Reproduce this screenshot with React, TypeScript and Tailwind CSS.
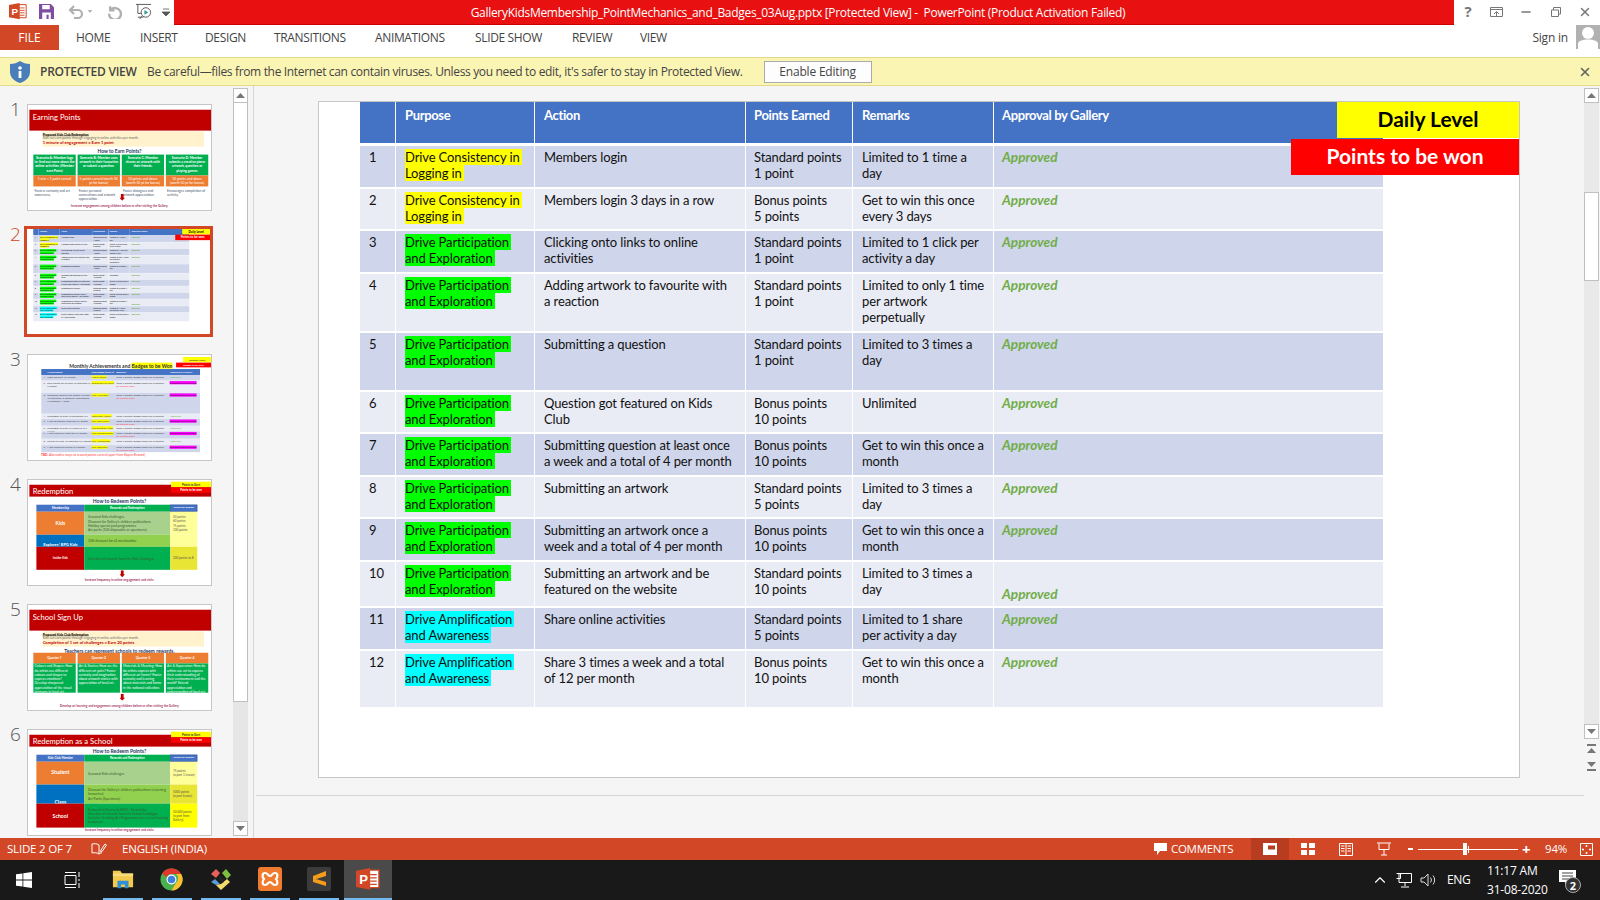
import React from 'react';
import { Minus, X, ChevronUp } from 'lucide-react';

const ui = "font-['Open_Sans',sans-serif]";
const calibri = "font-['Lato',sans-serif]";

type Row = { n: number; purpose: string[]; tone: string; action: string[]; points: string[]; remarks: string[]; h: string; low?: boolean };

const YELLOW = 'bg-[#ffff00]';
const GREEN = 'bg-[#00ff00]';
const CYAN = 'bg-[#00ffff]';
const consistency = ['Drive Consistency in', 'Logging in'];
const participation = ['Drive Participation', 'and Exploration'];
const amplification = ['Drive Amplification', 'and Awareness'];

const rows: Row[] = [
  { n: 1, purpose: consistency, tone: YELLOW, action: ['Members login'], points: ['Standard points', '1 point'], remarks: ['Limited to 1 time a', 'day'], h: 'h-[41px]' },
  { n: 2, purpose: consistency, tone: YELLOW, action: ['Members login 3 days in a row'], points: ['Bonus points', '5 points'], remarks: ['Get to win this once', 'every 3 days'], h: 'h-[40px]' },
  { n: 3, purpose: participation, tone: GREEN, action: ['Clicking onto links to online', 'activities'], points: ['Standard points', '1 point'], remarks: ['Limited to 1 click per', 'activity a day'], h: 'h-[41px]' },
  { n: 4, purpose: participation, tone: GREEN, action: ['Adding artwork to favourite with', 'a reaction'], points: ['Standard points', '1 point'], remarks: ['Limited to only 1 time', 'per artwork', 'perpetually'], h: 'h-[57px]' },
  { n: 5, purpose: participation, tone: GREEN, action: ['Submitting a question'], points: ['Standard points', '1 point'], remarks: ['Limited to 3 times a', 'day'], h: 'h-[57px]' },
  { n: 6, purpose: participation, tone: GREEN, action: ['Question got featured on Kids', 'Club'], points: ['Bonus points', '10 points'], remarks: ['Unlimited'], h: 'h-[40px]' },
  { n: 7, purpose: participation, tone: GREEN, action: ['Submitting question at least once', 'a week and a total of 4 per month'], points: ['Bonus points', '10 points'], remarks: ['Get to win this once a', 'month'], h: 'h-[41px]' },
  { n: 8, purpose: participation, tone: GREEN, action: ['Submitting an artwork'], points: ['Standard points', '5 points'], remarks: ['Limited to 3 times a', 'day'], h: 'h-[40px]' },
  { n: 9, purpose: participation, tone: GREEN, action: ['Submitting an artwork once a', 'week and a total of 4 per month'], points: ['Bonus points', '10 points'], remarks: ['Get to win this once a', 'month'], h: 'h-[41px]' },
  { n: 10, purpose: participation, tone: GREEN, action: ['Submitting an artwork and be', 'featured on the website'], points: ['Standard points', '10 points'], remarks: ['Limited to 3 times a', 'day'], h: 'h-[44px]', low: true },
  { n: 11, purpose: amplification, tone: CYAN, action: ['Share online activities'], points: ['Standard points', '5 points'], remarks: ['Limited to 1 share', 'per activity a day'], h: 'h-[41px]' },
  { n: 12, purpose: amplification, tone: CYAN, action: ['Share 3 times a week and a total', 'of 12 per month'], points: ['Bonus points', '10 points'], remarks: ['Get to win this once a', 'month'], h: 'h-[56px]' },
];

const Lines = ({ lines }: { lines: string[] }) => (
  <>
    {lines.map((l) => (
      <div key={l} className="whitespace-nowrap">{l}</div>
    ))}
  </>
);

const colClass = 'grid grid-cols-[35px_138px_210px_106px_140px_389px] gap-x-[1px]';

function PointsSlide() {
  const heads = [
    ['', 'pl-[9px]'],
    ['Purpose', 'pl-[9px]'],
    ['Action', 'pl-[9px]'],
    ['Points Earned', 'pl-[8px]'],
    ['Remarks', 'pl-[9px]'],
    ['Approval by Gallery', 'pl-[8px]'],
  ];
  return (
    <div className={`relative h-[675px] w-[1200px] bg-white pl-[41px] text-[13px] leading-[16px] tracking-[-0.12px] text-[#111] ${calibri}`}>
      <div className={`${colClass} mb-[3px] h-[41px] font-bold tracking-[-0.35px] text-white`}>
        {heads.map(([h, pad], i) => (
          <div key={i} className={`bg-[#4472c4] pt-[5px] ${pad}`}>{h}</div>
        ))}
      </div>
      <div className="flex flex-col gap-y-[2px]">
        {rows.map((r) => {
          const bg = r.n % 2 ? 'bg-[#cfd5ea]' : 'bg-[#e9ebf5]';
          return (
            <div key={r.n} className={`${colClass} ${r.h}`}>
              <div className={`${bg} pl-[9px] pt-[3px]`}>{r.n}</div>
              <div className={`${bg} pl-[9px] pt-[3px]`}>
                {r.purpose.map((l) => (
                  <div key={l}>
                    <span className={`${r.tone} whitespace-nowrap pr-[2px]`}>{l}</span>
                  </div>
                ))}
              </div>
              <div className={`${bg} pl-[9px] pt-[3px]`}><Lines lines={r.action} /></div>
              <div className={`${bg} pl-[8px] pt-[3px]`}><Lines lines={r.points} /></div>
              <div className={`${bg} pl-[9px] pt-[3px]`}><Lines lines={r.remarks} /></div>
              <div className={`${bg} flex pl-[8px] pt-[3px] pb-[4px] ${r.low ? 'items-end' : 'items-start'}`}>
                <span className="text-[13.6px] font-bold italic tracking-normal text-[#70ad47]">Approved</span>
              </div>
            </div>
          );
        })}
      </div>
      <div className="absolute right-0 top-0 flex h-[36px] w-[182px] items-center justify-center bg-[#ffff00] pb-[2px] text-[21px] font-bold tracking-normal text-black">Daily Level</div>
      <div className="absolute right-0 top-[37px] flex h-[36px] w-[228px] items-center justify-center bg-[#ff0000] pb-[2px] text-[21px] font-bold tracking-normal text-white">Points to be won</div>
    </div>
  );
}

const SlideTitle = ({ text, tall }: { text: string; tall?: boolean }) => (
  <div className={`ml-[9px] flex bg-[#c00000] pl-[22px] text-[50px] text-white ${tall ? 'h-[137px] items-start pt-[14px]' : 'h-[78px] items-center'}`}>{text}</div>
);

const Badges = () => (
  <div className="absolute right-0 top-[11px] w-[262px] text-center text-[19px] font-bold">
    <div className="h-[37px] bg-[#ffff00] leading-[37px] text-[#333]">Points to Earn</div>
    <div className="h-[35px] bg-[#ff0000] leading-[35px] text-white">Points to be won</div>
  </div>
);

const DownArrow = () => (
  <svg viewBox="0 0 36 46" className="h-[46px] w-[36px]"><path d="M9 0h18v26h9L18 46 0 26h9z" fill="#c00000" /></svg>
);

function CardsSlide({ title, line, heading, cards, footer, swap }: { title: string; line: string; heading: string; cards: { top: string; bottom: string; below?: string }[]; footer: string; swap?: boolean }) {
  return (
    <div className={`relative h-[675px] w-[1200px] bg-white pt-[31px] ${calibri}`}>
      <SlideTitle text={title} tall />
      <div className="ml-[96px] mt-[5px] h-[100px] w-[1058px] bg-[#fff2cc] pt-[6px] text-[21px] leading-[26px]">
        <div className="font-bold text-black underline">Proposed Kids Club Redemption</div>
        <div className="text-[#666]">Kids can earn points through engaging in online activities per month.</div>
        <div className="text-[27px] font-bold text-[#c00000]">{line}</div>
      </div>
      <div className="mt-[12px] text-center text-[32px] font-bold leading-[36px] text-[#1f3864]">{heading}</div>
      <div className={`${swap ? 'mt-[-8px] h-[330px]' : 'mt-[4px] h-[318px]'} ml-[35px] flex w-[1147px] gap-x-[12px] text-center text-[22px] leading-[28px] text-white`}>
        {cards.map((c, i) => (
          <div key={i} className="flex-1">
            {swap ? (
              <>
                <div className="h-[70px] bg-[#ed7d31] pt-[18px] font-bold">{c.top}</div>
                <div className="h-[192px] overflow-hidden bg-[#00b050] px-[8px] pt-[4px] text-left">{c.bottom}</div>
              </>
            ) : (
              <>
                <div className="h-[137px] overflow-hidden bg-[#00b050] px-[8px] pt-[6px] font-bold">{c.top}</div>
                <div className="h-[72px] overflow-hidden bg-[#ed7d31] px-[8px] pt-[8px]">{c.bottom}</div>
                <div className="px-[8px] pt-[14px] text-left text-[#44546a]">{c.below}</div>
              </>
            )}
          </div>
        ))}
      </div>
      <div className="text-center text-[20px] font-bold text-[#a5305e]">{footer}</div>
      <div className="absolute left-[600px] top-[582px]"><DownArrow /></div>
    </div>
  );
}

const AchievementRows = [
  { a: 'Login 30 days in a month', b: 'Active Streak', c: 'Once a month; Badge shows for 3 months', d: 'Approved', h: 'h-[37px]', bg: 'bg-[#cfd5ea]' },
  { a: 'Earn points on at least 10 activities in a month', b: 'Exploring Kid Scout', c: 'Once a month; Badge shows for 3 months', d: 'pending', h: 'h-[81px]', bg: 'bg-[#e9ebf5]' },
  { a: 'Complete most of the month: at least 10 activities, 5 artworks, 3 questions, 2 reactions, 1 share', b: 'The Allrounder', c: 'Once a month; Badge shows for 3 months', d: 'pending', h: 'h-[136px]', bg: 'bg-[#cfd5ea]' },
  { a: 'Submitted at least 10 questions in a month', b: 'Inquiring Monkey', c: 'Once a month; Badge shows for 3 months', d: 'Approved', h: 'h-[35px]', bg: 'bg-[#e9ebf5]' },
  { a: 'Most questions featured in a month', b: 'The Interviewer', c: 'Once a month; Badge shows for 3 months', d: 'pending', h: 'h-[44px]', bg: 'bg-[#cfd5ea]' },
  { a: 'Submitted at least 10 artworks in a month', b: 'The Budding Artist', c: 'Once a month; Badge shows for 3 months', d: 'Approved', h: 'h-[37px]', bg: 'bg-[#e9ebf5]' },
  { a: 'Most artworks featured in a month', b: 'The Communicator', c: 'Once a month; Badge shows for 3 months', d: 'pending', h: 'h-[48px]', bg: 'bg-[#cfd5ea]' },
  { a: 'Shared at least 10 activities in a month', b: 'The Ambassador', c: 'Once a month; Badge shows for 3 months', d: 'Approved', h: 'h-[42px]', bg: 'bg-[#e9ebf5]' },
  { a: 'Most artworks shared in a month', b: 'The Inspirator', c: 'Once a month; Badge shows for 3 months', d: 'pending', h: 'h-[46px]', bg: 'bg-[#cfd5ea]' },
];

function AchievementsSlide() {
  const grid = 'grid grid-cols-[39px_289px_160px_350px_199px] gap-x-[1px]';
  return (
    <div className={`relative h-[675px] w-[1200px] bg-white pt-[52px] text-[17px] leading-[19px] text-[#444] ${calibri}`}>
      <div className="pl-[271px] text-[33px] font-bold leading-[36px] text-[#333]">
        Monthly Achievements and <span className="bg-[#ffff00]">Badges to be Won</span>
      </div>
      <div className={`${grid} ml-[87px] mt-[4px] h-[39px] w-[1041px] bg-[#4472c4] pt-[8px] font-bold text-white`}>
        <div /><div>Achievement</div><div>Kids Badge (level 1)</div><div>Remarks</div><div>Approval by Gallery</div>
      </div>
      <div className="ml-[87px] w-[1041px]">
        {AchievementRows.map((r, i) => (
          <div key={i} className={`${grid} ${r.h} ${r.bg} overflow-hidden pt-[4px]`}>
            <div className="pl-[14px]">{i + 1}</div>
            <div>{r.a}</div>
            <div><span className="bg-[#ffff00]">{r.b}</span></div>
            <div>
              {r.c}
              {r.d !== 'Approved' && <div className="text-[#ff4040]">no renewal copy</div>}
            </div>
            <div>{r.d === 'Approved' ? <span className="text-[#70ad47]">Approved</span> : <span className="bg-[#ff00ff] text-[#222]">Pending to be reviewed</span>}</div>
          </div>
        ))}
      </div>
      <div className="ml-[85px] mt-[8px] text-[21px] text-[#ff4040]"><b>TBD:</b> Alternative ways to reward points earned (apart from Kopen Reward)</div>
      <div className="absolute right-0 top-[13px] flex flex-col items-end text-center font-bold">
        <div className="h-[35px] w-[183px] bg-[#ffff00] leading-[35px] text-[#333]">Monthly Level</div>
        <div className="mt-[2px] h-[31px] w-[229px] bg-[#ff0000] leading-[31px] text-white">Badges to be won</div>
      </div>
    </div>
  );
}

type RedeemRow = { label: string; cls: string; mid: string[]; midBg: string; end: string[]; endBg: string; h: string; labelCls: string };

function RedeemSlide({ title, first, rowsData, footer, arrow }: { title: string; first: string; rowsData: RedeemRow[]; footer: string; arrow?: boolean }) {
  return (
    <div className={`relative h-[675px] w-[1200px] bg-white pt-[31px] ${calibri}`}>
      <SlideTitle text={title} />
      <div className="mt-[12px] text-center text-[33px] font-bold leading-[36px] text-[#1f3864]">How to Redeem Points?</div>
      <div className="ml-[55px] mt-[5px] w-[1055px] text-[22px] leading-[27px]">
        <div className="grid h-[46px] grid-cols-[314px_564px_177px] text-center text-[20px] font-bold text-white">
          <div className="bg-[#4472c4] pt-[10px]">{first}</div>
          <div className="bg-[#00b050] pt-[10px]">Rewards and Redemption</div>
          <div className="border-[4px] border-[#2f5597] bg-[#4472c4] text-[17px] leading-[19px]">Points per quarter</div>
        </div>
        {rowsData.map((r) => (
          <div key={r.label} className={`grid grid-cols-[314px_564px_177px] ${r.h}`}>
            <div className={`flex justify-center font-bold text-white ${r.cls} ${r.labelCls}`}>{r.label}</div>
            <div className={`${r.midBg} flex flex-col justify-center pl-[24px] text-[#3b5a2a]`}>
              {r.mid.map((m) => <div key={m}>{m}</div>)}
            </div>
            <div className={`${r.endBg} flex flex-col justify-center pl-[18px] text-[20px] text-[#555]`}>
              {r.end.map((m) => <div key={m}>{m}</div>)}
            </div>
          </div>
        ))}
      </div>
      <div className={arrow ? 'ml-[600px] h-[52px] pt-[3px]' : 'h-[1px]'}>{arrow && <DownArrow />}</div>
      <div className="text-center text-[20px] font-bold text-[#a5305e]">{footer}</div>
      <Badges />
    </div>
  );
}

const slide1Cards = [
  { top: 'Scenario A: Member logs in: find out more about the online activities. (Member earn Point)', bottom: '1 min = 1 point earned', below: 'Fosters curiosity and art awareness.' },
  { top: 'Scenario B: Member uses artwork in their favourites or submit a question.', bottom: '5 points earned (worth 50 pt for bonus)', below: 'Foster personal connections and artwork appreciation.' },
  { top: 'Scenario C: Member shares an artwork with their friends.', bottom: '10 points and above (worth 50 pt for bonus)', below: 'Foster dialogues and artwork appreciation.' },
  { top: 'Scenario D: Member submits a creative piece: artwork, question or playing games.', bottom: '10 points and above (worth 50 pt for bonus)', below: 'Encourages completion of activity.' },
];
const slide5Cards = [
  { top: 'Quarter 1', bottom: 'Colours and Shapes: How do artists use different colours and shapes to express emotions? Develop sharpened appreciation of the visual language in local art.' },
  { top: 'Quarter 2', bottom: 'Art & Stories: How are the different art pairs? Foster curiosity and imagination about artwork stories with appreciation of local art.' },
  { top: 'Quarter 3', bottom: 'Materials & Meaning: How do artists express with different art forms? Foster curiosity and learning about materials and forms in the national collection.' },
  { top: 'Quarter 4', bottom: 'Art & Expression: How do artists use art to express their understanding of their environment and the world? Extend appreciation and understanding of local art.' },
];

const Slides: Record<number, React.ReactNode> = {
  1: <CardsSlide title="Earning Points" line="1 minute of engagement = Earn 1 point" heading="How to Earn Points?" cards={slide1Cards} footer="Increase engagement among children before or after visiting the Gallery." />,
  2: <PointsSlide />,
  3: <AchievementsSlide />,
  4: <RedeemSlide arrow title="Redemption" first="Membership" footer="Increase frequency in online engagement and visits." rowsData={[
    { label: 'Kids', cls: 'bg-[#ed7d31]', labelCls: 'items-center text-[32px]', mid: ['Seasonal Kids challenges', "Discount for Gallery's children publications", 'Holiday special paid programmes', 'Art packs (100 disposable or specimens)'], midBg: 'bg-[#a9d18e]', end: ['50 points', '60 points', '75 points', '100 points'], endBg: 'bg-[#ffff99]', h: 'h-[151px]' },
    { label: 'Explorer/ BPG Kids', cls: 'bg-[#0070c0]', labelCls: 'items-end text-[26px]', mid: ['10% discount for all merchandise'], midBg: 'bg-[#92d050]', end: [''], endBg: 'bg-[#ffff99]', h: 'h-[79px]' },
    { label: 'Insider Kids', cls: 'bg-[#c00000]', labelCls: 'items-center text-[19px]', mid: ['Selection of rewards from the Kids Catalogue'], midBg: 'bg-[#00b050]', end: ['100 points to 8'], endBg: 'bg-[#e9e535]', h: 'h-[151px]' },
  ]} />,
  5: <CardsSlide swap title="School Sign Up" line="Completion of 1 set of challenges = Earn 20 points" heading="Teachers can represent schools to redeem rewards." cards={slide5Cards} footer="Develop art learning and engagement among children before or after visiting the Gallery." />,
  6: <RedeemSlide title="Redemption as a School" first="Kids Club Member" footer="Increase frequency in online engagement and visits." rowsData={[
    { label: 'Student', cls: 'bg-[#ed7d31]', labelCls: 'items-center pb-[20px] text-[34px]', mid: ['Seasonal Kids challenges'], midBg: 'bg-[#a9d18e]', end: ['75 points', '(report 1 lesson)'], endBg: 'bg-[#ffff99]', h: 'h-[150px]' },
    { label: 'Class', cls: 'bg-[#0070c0]', labelCls: 'items-end text-[34px]', mid: ["Discount for Gallery's children publications (returning favourites)", 'Art Packs (Specimens)'], midBg: 'bg-[#92d050]', end: ['5000 points', '(report lesson)'], endBg: 'bg-[#e9e535]', h: 'h-[125px]' },
    { label: 'School', cls: 'bg-[#c00000]', labelCls: 'items-center text-[34px]', mid: ['Featured in Quarterly EDM / Newsletter', 'Selection of rewards from the School Catalogue', '(includes Teaching Art Programmes on a set of learning resources)'], midBg: 'bg-[#00b050]', end: ['50,000 points', '(report from Gallery)'], endBg: 'bg-[#ffff00]', h: 'h-[157px]' },
  ]} />,
};

function Thumb({ n, active }: { n: number; active?: boolean }) {
  return (
    <div className="flex h-[125px] items-start">
      <div className={`mt-[-7px] w-[24px] pl-[10px] text-[19px] font-light leading-[24px] ${active ? 'text-[#d24726]' : 'text-[#555]'} ${ui}`}>{n}</div>
      <div className={active ? 'mt-[-3px] border-[3px] border-[#d24726] bg-white' : 'ml-[3px] border border-[#c6c6c6] bg-white'}>
        <div className="h-[105px] w-[183px] overflow-hidden">
          <div className="origin-top-left scale-[0.1525]">{Slides[n]}</div>
        </div>
      </div>
    </div>
  );
}

const Arrow = ({ down }: { down?: boolean }) => (
  <div className="flex h-[15px] w-[15px] items-center justify-center border border-[#c0c0c0] bg-white">
    <svg viewBox="0 0 9 5" className="h-[5px] w-[9px]"><path d={down ? 'M0 0h9L4.5 5z' : 'M0 5h9L4.5 0z'} fill="#777" /></svg>
  </div>
);

function PptIcon({ size }: { size: number }) {
  return (
    <svg viewBox="0 0 22 20" width={size} height={size * 20 / 22}>
      <path d="M12 2h9v16h-9z" fill="#fff" stroke="#d24726" strokeWidth="1.2" />
      <path d="M13 6h6M13 9h6M13 12h6M13 15h6" stroke="#d24726" strokeWidth="1.1" />
      <path d="M0 2.5 13 0v20L0 17.5z" fill="#d24726" />
      <text x="3" y="14.5" fontSize="12" fontWeight="700" fill="#fff" fontFamily="Liberation Sans, sans-serif">P</text>
    </svg>
  );
}

function TitleBar() {
  return (
    <div className={`flex h-[25px] items-start ${ui}`}>
      <div className="flex h-[25px] w-[174px] items-center pb-[2px]">
        <div className="ml-[9px]"><PptIcon size={18} /></div>
        <svg viewBox="0 0 14 14" className="ml-[12px] h-[15px] w-[15px]"><path d="M0 0h11l3 3v11H0z" fill="#7e4ea3" /><path d="M3 1h7v4H3zM3 8h8v6H3z" fill="#fff" /><path d="M7 10h2v4H7z" fill="#7e4ea3" /></svg>
        <svg viewBox="0 0 16 14" className="ml-[14px] h-[14px] w-[16px]" fill="none" stroke="#b0b0b0" strokeWidth="2.2"><path d="M2 5h8a4 4 0 0 1 0 8H6" /><path d="M6 1 2 5l4 4" /></svg>
        <svg viewBox="0 0 6 4" className="ml-[3px] h-[3px] w-[6px]"><path d="M0 0h6L3 4z" fill="#b0b0b0" /></svg>
        <svg viewBox="0 0 14 14" className="ml-[14px] h-[15px] w-[15px]" fill="none" stroke="#b0b0b0" strokeWidth="2.2"><path d="M3 2v4h4" /><path d="M3.5 5.5A5.5 5.5 0 1 1 2 9" /></svg>
        <svg viewBox="0 0 18 18" className="ml-[13px] h-[17px] w-[17px]" fill="none"><path d="M1 1.5h16M3 2v9h5M7 14l-2 3M3 15h6" stroke="#555" /><circle cx="11.5" cy="10" r="5" fill="#fff" stroke="#555" /><path d="M10 7.5v5l4-2.5z" fill="#2f9c8b" /></svg>
        <svg viewBox="0 0 8 8" className="ml-[10px] h-[8px] w-[8px]"><path d="M1 1h6M0 4h8L4 8z" fill="#555" stroke="#555" strokeWidth="0.8" /></svg>
      </div>
      <div className="flex h-[25px] w-[1280px] items-center justify-center border-b border-[#c00] bg-[#e81010] pr-[32px] pt-[1px] text-[12px] tracking-[-0.3px] text-white">
        GalleryKidsMembership_PointMechanics_and_Badges_03Aug.pptx [Protected View] -&nbsp; PowerPoint (Product Activation Failed)
      </div>
      <div className="flex h-[25px] flex-1 items-center pb-[2px] text-[#777]">
        <span className="ml-[8px] w-[12px] text-center text-[15px] font-bold leading-none">?</span>
        <svg viewBox="0 0 13 10" className="ml-[16px] h-[10px] w-[13px]" fill="none" stroke="#777"><path d="M.5.500h12v9H.5zM.5 2.500h12" /><path d="M4 7l2.500-2.500L9 7M6.500 5v4" /></svg>
        <Minus size={14} strokeWidth={2.5} className="ml-[16px]" />
        <svg viewBox="0 0 10 10" className="ml-[18px] h-[10px] w-[10px]" fill="none" stroke="#777"><path d="M.5 3h7v6.500h-7zM2.500 3V.5h7v6.500H8" /></svg>
        <X size={14} strokeWidth={2.5} className="ml-[17px]" />
      </div>
    </div>
  );
}

const tabs = [
  ['HOME', 'w-[64px]'],
  ['INSERT', 'w-[65px]'],
  ['DESIGN', 'w-[69px]'],
  ['TRANSITIONS', 'w-[101px]'],
  ['ANIMATIONS', 'w-[100px]'],
  ['SLIDE SHOW', 'w-[97px]'],
  ['REVIEW', 'w-[68px]'],
  ['VIEW', 'w-[50px]'],
];

function Tabs() {
  return (
    <div className={`flex h-[32px] items-start text-[12px] text-[#444] ${ui}`}>
      <div className="flex h-[25px] w-[59px] items-center justify-center bg-[#d24726] text-white">FILE</div>
      <div className="ml-[17px] flex h-[25px] items-center tracking-[-0.35px]">
        {tabs.map(([t, w]) => <div key={t} className={w}>{t}</div>)}
      </div>
      <div className="ml-auto flex h-[25px] items-center tracking-[-0.2px]">Sign in</div>
      <div className="ml-[8px] h-[24px] w-[24px] overflow-hidden bg-[#b1b1b1]">
        <svg viewBox="0 0 24 24" className="h-[24px] w-[24px]"><circle cx="12" cy="8" r="6" fill="#fff" /><path d="M2 24v-5c0-3 4-4.500 10-4.500S22 16 22 19v5z" fill="#fff" /></svg>
      </div>
    </div>
  );
}

function ProtectedBar() {
  return (
    <div className={`flex h-[29px] items-center border-y border-[#e2d98f] bg-[#fbf5b4] text-[12px] text-[#444] ${ui}`}>
      <svg viewBox="0 0 20 22" className="ml-[10px] h-[22px] w-[20px]"><path d="M10 0c3 2 6 3 10 3v8c0 5-4 9-10 11C4 20 0 16 0 11V3c4 0 7-1 10-3z" fill="#4a7ebb" /><circle cx="10" cy="7" r="1.800" fill="#fff" /><path d="M8.600 10h2.800v7H8.600z" fill="#fff" /></svg>
      <span className="ml-[10px] w-[107px] font-semibold tracking-[-0.25px]">PROTECTED VIEW</span>
      <span className="tracking-[-0.34px]">Be careful—files from the Internet can contain viruses. Unless you need to edit, it's safer to stay in Protected View.</span>
      <button className="ml-[21px] h-[22px] w-[108px] border border-[#ababab] bg-[#fdfdfd] tracking-[-0.2px]">Enable Editing</button>
      <X size={14} strokeWidth={2.8} className="ml-auto mr-[8px] text-[#666]" />
    </div>
  );
}

function Sidebar() {
  return (
    <div className="flex w-[252px] shrink-0">
      <div className="w-[233px] overflow-hidden pt-[18px]">
        {[1, 2, 3, 4, 5, 6].map((n) => <Thumb key={n} n={n} active={n === 2} />)}
      </div>
      <div className="mt-[2px] flex h-[748px] w-[15px] flex-col bg-[#e6e6e6]">
        <Arrow />
        <div className="h-[599px] border-x border-b border-[#c0c0c0] bg-white" />
        <div className="flex-1" />
        <Arrow down />
      </div>
    </div>
  );
}

function RightScroll() {
  return (
    <div className="mr-[1px] mt-[2px] flex w-[15px] shrink-0 flex-col items-center">
      <div className="flex h-[651px] w-[15px] flex-col bg-[#e9e9e9]">
        <Arrow />
        <div className="mt-[89px] h-[89px] border border-[#c0c0c0] bg-white" />
        <div className="flex-1" />
        <Arrow down />
      </div>
      <svg viewBox="0 0 9 9" className="mt-[5px] h-[9px] w-[9px]"><path d="M0 2h9V0H0zM0 9h9L4.500 4z" fill="#777" /></svg>
      <svg viewBox="0 0 9 9" className="mt-[9px] h-[9px] w-[9px]"><path d="M0 0h9L4.500 5zM0 7h9v2H0z" fill="#777" /></svg>
    </div>
  );
}

function StatusBar() {
  return (
    <div className={`flex h-[22px] items-center whitespace-nowrap bg-[#d24726] text-[11.500px] text-white ${ui}`}>
      <span className="ml-[7px] w-[64px] tracking-[-0.2px]">SLIDE 2 OF 7</span>
      <svg viewBox="0 0 16 14" className="ml-[20px] h-[14px] w-[16px]" fill="none" stroke="#fff"><path d="M8 3C6 1.500 3 1.500 1 2v9c2-.5 5-.5 7 1 1-.8 2-1.200 3-1.300M8 3v9" /><path d="M10 8l4-6 1.500 1-4 6-2 .7z" /></svg>
      <span className="ml-[15px] tracking-[-0.2px]">ENGLISH (INDIA)</span>
      <div className="ml-auto mr-[7px] flex h-[22px] items-center">
        <svg viewBox="0 0 13 12" className="h-[12px] w-[13px]"><path d="M0 0h13v8H6l-3 4V8H0z" fill="#fff" /></svg>
        <span className="ml-[4px] w-[80px] tracking-[-0.3px]">COMMENTS</span>
        <div className="flex h-[22px] w-[38px] items-center justify-center bg-[#b83c1f]">
          <svg viewBox="0 0 14 12" className="h-[12px] w-[14px]"><path d="M0 0h14v12H0z" fill="#fff" /><path d="M5 2.500h7v4H5z" fill="#b83c1f" /></svg>
        </div>
        <svg viewBox="0 0 14 12" className="ml-[12px] h-[12px] w-[14px]" fill="#fff"><path d="M0 0h6v5H0zM8 0h6v5H8zM0 7h6v5H0zM8 7h6v5H8z" /></svg>
        <svg viewBox="0 0 14 13" className="ml-[24px] h-[13px] w-[14px]" fill="none" stroke="#fff"><path d="M.5.500h13v12H.5zM7 .5v12M2 3h3.500M2 5.500h3.500M2 8h3.500M8.500 3H12M8.500 5.500H12M8.500 8H12" /></svg>
        <svg viewBox="0 0 14 14" className="ml-[24px] h-[14px] w-[14px]" fill="none" stroke="#fff"><path d="M0 1h14M2 1.500v6h10v-6M7 8v5M4 13h6" /></svg>
        <span className="ml-[17px] h-[2px] w-[5px] bg-white" />
        <div className="relative ml-[5px] h-[1px] w-[100px] bg-white">
          <span className="absolute left-[45px] top-[-6px] h-[12px] w-[4px] bg-white" />
          <span className="absolute left-[50px] top-[-3px] h-[7px] w-[1px] bg-white" />
        </div>
        <span className="ml-[4px] w-[8px] text-center text-[15px] font-bold leading-none">+</span>
        <span className="ml-[15px] w-[24px] tracking-[-0.2px]">94%</span>
        <svg viewBox="0 0 13 13" className="ml-[11px] h-[13px] w-[13px]" fill="none" stroke="#fff"><path d="M.5.500h12v12H.5z" /><path d="M6.500 2v2M6.500 9v2M2 6.500h2M9 6.500h2" strokeWidth="1.500" /></svg>
      </div>
    </div>
  );
}

const taskIcons: React.ReactNode[] = [
  <svg key="folder" viewBox="0 0 24 22" className="h-[22px] w-[22px]"><path d="M1 2h8l2 3h12v15H1z" fill="#f3c94d" /><path d="M1 5h22v3H1z" fill="#f8dc7b" /><path d="M6 13h12v8h-4v-4h-4v4H6z" fill="#2d8fd5" /></svg>,
  <svg key="chrome" viewBox="0 0 24 24" className="h-[23px] w-[23px]"><circle cx="12" cy="12" r="11.500" fill="#4caf50" /><path d="M12 .5a11.500 11.500 0 0 1 10 5.750H12a6 6 0 0 0-5.500 3.500L2.200 5.800A11.500 11.500 0 0 1 12 .5z" fill="#e0362c" /><path d="M22 6.250A11.500 11.500 0 0 1 12 23.500l5-8.500a6 6 0 0 0 0-8.750z" fill="#fbc02d" /><circle cx="12" cy="12" r="5.200" fill="#fff" /><circle cx="12" cy="12" r="4" fill="#3f7fe0" /></svg>,
  <svg key="kite" viewBox="0 0 24 24" className="h-[24px] w-[24px]"><path d="M7 2l4 4-4 5-5-4z" fill="#e8605a" /><path d="M13 6l4-4 5 6-4 4z" fill="#7bc043" /><path d="M6 12l5 5-4 1-5-3z" fill="#5b9bd5" /><path d="M12 17l6-5 3 3-9 8-5-5z" fill="#f3dc6b" /><path d="M10 9l6 3-2 4-4-3z" fill="#222" /></svg>,
  <svg key="xampp" viewBox="0 0 24 24" className="h-[24px] w-[24px]"><rect width="24" height="24" rx="3" fill="#f07a2e" /><path d="M7 6c3 0 3 3 5 3s2-3 5-3 3 4 1 6c2 2 2 6-1 6s-3-3-5-3-2 3-5 3-3-4-1-6c-2-2-2-6 1-6z" fill="none" stroke="#fff" strokeWidth="2.200" /></svg>,
  <svg key="sublime" viewBox="0 0 24 24" className="h-[24px] w-[24px]"><rect width="24" height="24" rx="2" fill="#3b3b3b" /><path d="M19 4v5L6 13V9zM6 11l13 4v4L6 15z" fill="#f59c1a" /></svg>,
];

function Taskbar() {
  return (
    <div className={`flex h-[40px] items-center bg-[#191919] text-white ${ui}`}>
      <div className="flex w-[48px] justify-center">
        <svg viewBox="0 0 16 16" className="h-[16px] w-[16px]" fill="#fff"><path d="M0 2.300 6.500 1.400v6.200H0zM7.300 1.300 16 0v7.600H7.300zM0 8.400h6.500v6.200L0 13.700zM7.300 8.400H16V16l-8.700-1.300z" /></svg>
      </div>
      <div className="flex w-[48px] justify-center">
        <svg viewBox="0 0 16 16" className="h-[16px] w-[16px]" fill="none" stroke="#fff"><path d="M1 3.500h11v9H1zM1 .5h11M1 15.500h11M15 0v5M15 7v2M15 11v5" /></svg>
      </div>
      <div className="ml-[2px] flex">
        {taskIcons.map((icon, i) => (
          <div key={i} className="flex h-[40px] w-[49px] flex-col items-center">
            <div className="flex h-[38px] items-center">{icon}</div>
            <div className="h-[2px] w-[40px] bg-[#76b9ed]" />
          </div>
        ))}
        <div className="ml-[1px] flex h-[40px] w-[48px] flex-col items-center bg-[#4a4a4a]">
          <div className="flex h-[38px] items-center"><PptIcon size={24} /></div>
          <div className="h-[2px] w-[48px] bg-[#76b9ed]" />
        </div>
      </div>
      <div className="ml-auto flex items-center">
        <ChevronUp size={18} strokeWidth={1.5} />
        <svg viewBox="0 0 16 15" className="ml-[7px] h-[15px] w-[16px]" fill="none" stroke="#fff"><path d="M3 .5h12.500v9H3zM9 10v3M5 14h8M.5.5h4v5h-4" /></svg>
        <svg viewBox="0 0 16 14" className="ml-[8px] h-[14px] w-[16px]" fill="none" stroke="#ddd"><path d="M1 5h3l4-4v12L4 9H1zM10.500 4.500a4 4 0 0 1 0 5M13 2.500a7 7 0 0 1 0 9" /></svg>
        <span className="ml-[11px] w-[24px] text-[12px] tracking-[-0.3px]">ENG</span>
        <div className="ml-[16px] w-[50px] whitespace-nowrap text-center text-[12px] leading-[19px] tracking-[-0.2px]">
          <div>11:17 AM</div>
          <div>31-08-2020</div>
        </div>
        <div className="relative ml-[22px] mr-[24px] h-[20px] w-[17px]">
          <svg viewBox="0 0 17 15" className="h-[15px] w-[17px]"><path d="M0 0h17v12H9l-3 3v-3H0z" fill="#fff" /><path d="M3 3h11M3 6h11M3 9h8" stroke="#444" /></svg>
          <span className="absolute left-[6px] top-[7px] flex h-[16px] w-[16px] items-center justify-center rounded-full border border-[#aaa] bg-[#333] text-[11px] font-bold leading-none">2</span>
        </div>
      </div>
    </div>
  );
}

export default function App() {
  return (
    <div className="flex h-[900px] w-[1600px] flex-col overflow-hidden bg-white">
      <TitleBar />
      <Tabs />
      <ProtectedBar />
      <div className="flex h-[752px] bg-[#f5f5f5]">
        <Sidebar />
        <div className="ml-[1px] flex-1 border-l border-[#d6d6d6]">
          <div className="ml-[2px] h-[710px] border-b border-[#d6d6d6] pl-[62px] pt-[15px]">
            <div className="w-[1202px] border border-[#c6c6c6]">
              <PointsSlide />
            </div>
          </div>
        </div>
        <RightScroll />
      </div>
      <StatusBar />
      <Taskbar />
    </div>
  );
}
